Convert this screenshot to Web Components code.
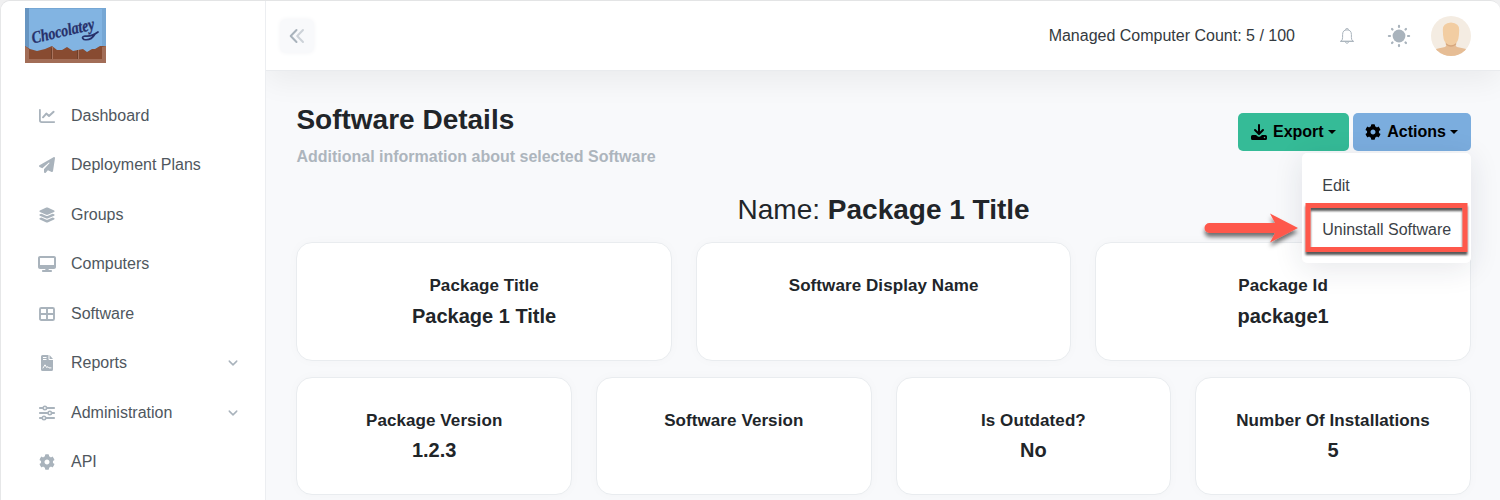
<!DOCTYPE html>
<html lang="en">
<head>
<meta charset="utf-8">
<title>Software Details</title>
<style>
html,body{margin:0;height:100%;overflow:hidden}
body{font:16px/24px "Liberation Sans",Arial,sans-serif;color:#212529;background:#f0f0f1}
</style>
</head>
<body>
<app-shell></app-shell>
<script>
const define = (name, html) => customElements.define(name, class extends HTMLElement {
  constructor() {
    super();
    const t = document.createElement('template');
    t.innerHTML = html;
    this.attachShadow({mode: 'open'}).append(t.content.cloneNode(true));
  }
});

const gear = '<path d="M487.4 315.7l-42.6-24.6c4.3-23.2 4.3-47 0-70.2l42.6-24.6c4.9-2.8 7.1-8.6 5.5-14-11.1-35.6-30-67.8-54.7-94.6-3.8-4.1-10-5.1-14.8-2.3L380.8 110c-17.9-15.4-38.5-27.3-60.8-35.1V25.8c0-5.6-3.9-10.5-9.4-11.7-36.7-8.2-74.3-7.8-109.2 0-5.5 1.2-9.4 6.1-9.4 11.7V75c-22.2 7.9-42.8 19.8-60.8 35.1L88.7 85.5c-4.9-2.8-11-1.9-14.8 2.3-24.7 26.7-43.6 58.9-54.7 94.6-1.7 5.4.6 11.2 5.5 14L67.3 221c-4.3 23.2-4.3 47 0 70.2l-42.6 24.6c-4.9 2.8-7.1 8.6-5.5 14 11.1 35.6 30 67.8 54.7 94.6 3.8 4.1 10 5.1 14.8 2.3l42.6-24.6c17.9 15.4 38.5 27.3 60.8 35.1v49.2c0 5.6 3.9 10.5 9.4 11.7 36.7 8.2 74.3 7.8 109.2 0 5.5-1.2 9.4-6.1 9.4-11.7v-49.2c22.2-7.9 42.8-19.8 60.8-35.1l42.6 24.6c4.9 2.8 11 1.9 14.8-2.3 24.7-26.7 43.6-58.9 54.7-94.6 1.5-5.5-.7-11.3-5.6-14.1zM256 336c-44.1 0-80-35.9-80-80s35.9-80 80-80 80 35.9 80 80-35.9 80-80 80z"/>';
const ICONS = {
  chart: ['0 0 16 16', '<g fill="none" stroke="currentColor" stroke-linecap="round" stroke-linejoin="round"><path d="M.9 1.8V12.300q0 1.800 1.800 1.800H15.200" stroke-width="1.800"/><path d="M4 9.300 7.300 5.600 10 8 14.600 3.800" stroke-width="2"/></g>'],
  plane: ['0 0 512 512', '<path d="M498.1 5.6c10.1 7 15.4 19.1 13.5 31.2l-64 416c-1.5 9.7-7.4 18.2-16 23s-18.9 5.4-28 1.6L284 427.7l-68.500 74.100c-8.900 9.700-22.900 12.900-35.200 8.100S160 493.200 160 480V396.400c0-4 1.500-7.800 4.200-10.700L331.800 202.800c5.800-6.300 5.600-16-.4-22s-15.700-6.400-22-.7L106 360.800 17.700 316.600C7.100 311.300 .3 300.700 0 288.900s5.900-22.800 16.100-28.700l448-256c10.700-6.100 23.900-5.500 34 1.400z"/>'],
  layers: ['16 0 544 512', '<path d="M264.5 5.2c14.9-6.9 32.1-6.9 47 0l218.600 101c8.500 3.900 13.900 12.400 13.900 21.800s-5.400 17.900-13.900 21.800l-218.600 101c-14.900 6.900-32.100 6.900-47 0L45.900 149.800C37.400 145.800 32 137.300 32 128s5.400-17.900 13.900-21.800zM476.900 209.600l53.200 24.600c8.500 3.900 13.900 12.400 13.900 21.800s-5.400 17.900-13.900 21.800l-218.600 101c-14.900 6.900-32.100 6.900-47 0L45.900 277.800C37.400 273.800 32 265.300 32 256s5.400-17.900 13.900-21.800l53.200-24.600 152 70.200c23.400 10.800 50.400 10.800 73.800 0zm-152 198.200l152-70.200 53.200 24.600c8.500 3.900 13.900 12.400 13.900 21.800s-5.400 17.900-13.900 21.800l-218.600 101c-14.900 6.900-32.100 6.900-47 0L45.900 405.800C37.400 401.800 32 393.300 32 384s5.400-17.900 13.900-21.800l53.200-24.600 152 70.200c23.400 10.800 50.400 10.800 73.800 0z"/>'],
  desktop: ['0 0 576 512', '<path d="M64 0C28.700 0 0 28.700 0 64V352c0 35.300 28.700 64 64 64H240l-10.700 32H160c-17.700 0-32 14.300-32 32s14.300 32 32 32H416c17.700 0 32-14.300 32-32s-14.300-32-32-32H346.700L336 416H512c35.300 0 64-28.700 64-64V64c0-35.300-28.700-64-64-64zM512 64V288H64V64z"/>'],
  table: ['0 0 16 16', '<path fill="none" stroke="currentColor" stroke-width="1.900" d="M2.300 2H13.700Q15 2 15 3.300V12.700Q15 14 13.700 14H2.300Q1 14 1 12.700V3.300Q1 2 2.300 2zM8 2V14M1 8H15"/>'],
  report: ['0 0 16 16', '<path fill-rule="evenodd" d="M3.500 0H9.500V4Q9.500 5 10.500 5H14V14.500Q14 16 12.500 16H3.500Q2 16 2 14.500V1.500Q2 0 3.500 0zM10.500 0 14 4H10.500zM4 2V3H7.500V2zM4 4V5H7.500V4z"/><path fill="none" stroke="#fff" stroke-linecap="round" stroke-linejoin="round" d="M4 13 6 9.800 7.600 12.500 9 11.700 10 12.900H12"/>'],
  sliders: ['0 0 16 16', '<g fill="none" stroke="currentColor" stroke-width="1.800" stroke-linecap="round"><path d="M.8 3H3.600M8.200 3H15.200M.8 8H8.500M13.100 8H15.200M.8 13H2.700M7.300 13H15.200"/><g stroke-width="1.600"><circle cx="5.900" cy="3" r="1.700"/><circle cx="10.800" cy="8" r="1.700"/><circle cx="5" cy="13" r="1.700"/></g></g>'],
  gear: ['0 0 512 512', gear],
  export: ['0 0 16 16', '<path fill="none" stroke="currentColor" stroke-width="2" stroke-linecap="round" stroke-linejoin="round" d="M8 1V9.300M4 6 8 10 12 6"/><path fill-rule="evenodd" d="M1.500 11H5L6.500 12.300Q8 13.300 9.500 12.300L11 11H14.500Q16 11 16 12.500V14.500Q16 16 14.500 16H1.500Q0 16 0 14.500V12.500Q0 11 1.500 11zM13.500 12.800A.75.75 0 1 0 13.500 14.300 .75.75 0 1 0 13.500 12.800z"/>'],
  chevron: ['0 0 16 16', '<path fill="none" stroke="currentColor" stroke-width="2.300" stroke-linecap="round" stroke-linejoin="round" d="M2 5 8 11 14 5"/>'],
  collapse: ['0 0 16 16', '<g fill="none" stroke="currentColor" stroke-width="2" stroke-linecap="round" stroke-linejoin="round"><path d="M7.500 2 1.700 8 7.500 14"/><path opacity=".55" d="M14 2 8.200 8 14 14"/></g>'],
  bell: ['0 0 16 16', '<path fill="none" stroke="currentColor" stroke-width="1" stroke-linejoin="round" d="M6.400 1.700Q6.400.6 8 .6T9.600 1.700M2 13.300H14Q12.400 12 12.400 9.600V6.600Q12.400 1.900 8 1.900T3.600 6.600V9.600Q3.600 12 2 13.300zM1 13.300H15M6.300 14.200Q6.800 15.200 8 15.200T9.700 14.200"/>'],
  sun: ['0 0 24 24', '<circle cx="12" cy="12" r="6.400"/><path stroke="currentColor" stroke-width="2.200" stroke-linecap="round" d="M12 1.900V3M12 21V22.100M1.900 12H3M21 12H22.100M5 5 5.500 5.500M18.500 18.500 19 19M5 19 5.500 18.500M18.500 5.500 19 5"/>']
};

customElements.define('app-icon', class extends HTMLElement {
  connectedCallback() {
    if (this.shadowRoot) return;
    const [box, art] = ICONS[this.getAttribute('name')];
    this.attachShadow({mode: 'open'}).innerHTML =
      `<style>:host{display:block;width:16px;height:16px;flex:none}svg{display:block;width:100%;height:100%}</style><svg viewBox="${box}" fill="currentColor">${art}</svg>`;
  }
});

define('brand-logo', `<style>:host{display:block;width:81px;height:55px;margin-left:24px}svg{display:block;overflow:visible}</style>
<svg width="81" height="55" viewBox="0 0 81 55">
<path fill="#82b4e2" d="M0 0H81V55H0z"/><path fill="#6795c1" d="M0 0H4V46H0z"/><path fill="#76a7d4" d="M77 1H81V46H77zM4 0H81V1H4z"/>
<path fill="#884b31" d="M0 38 5 41 12 43 20 41 27 38 32 42 37 42 42 39 48 43 53 42 58 41 62 44 67 41 70 41 75 38 81 38V55H0z"/>
<path fill="#a26d57" d="M0 38 4 41V51L0 55zM77 39 81 38V55L77 51zM0 55 4 51H77L81 55z"/>
<path stroke="#a8735d" d="M27.500 39V51M53.500 42V51"/><path stroke="#70402b" d="M26.500 40V51M52.500 42V51"/>
<text transform="translate(8 35.500) rotate(-13)" textLength="64" lengthAdjust="spacingAndGlyphs" font-family="Liberation Serif,serif" font-weight="bold" font-style="italic" fill="#27306a" stroke="#27306a" stroke-width=".3" font-size="17">Chocolatey</text>
<path fill="none" stroke="#27306a" stroke-width="1.700" stroke-linecap="round" d="M70 26Q66 33 59 31.500Q55.500 29 60 28Q66 29 73 24"/>
</svg>`);

customElements.define('nav-list', class extends HTMLElement {
  connectedCallback() {
    if (this.shadowRoot) return;
    const items = [['Dashboard','chart'],['Deployment Plans','plane'],['Groups','layers'],['Computers','desktop'],['Software','table'],['Reports','report',1],['Administration','sliders',1],['API','gear']];
    const root = this.attachShadow({mode: 'open'});
    root.innerHTML = `<style>:host{display:block}
.row{display:flex;align-items:center;height:49.520px;padding:0 27.500px 0 38px;color:#4f575e}
.label{flex:1}app-icon{color:#a9b3bc}.icon{margin:0 16px 0 0}
.desktop{width:18px;margin:0 15px 0 -1px}.arrow{width:10px;height:10px}</style>` +
      items.map(([t, i, e]) => `<div class="row"><app-icon class="icon ${i}" name="${i}"></app-icon><span class="label">${t}</span>${e ? '<app-icon class="arrow" name="chevron"></app-icon>' : ''}</div>`).join('');
  }
});

define('side-bar', `<style>
:host{display:block;box-sizing:border-box;width:265px;height:499px;flex:none;background:#fff;border-right:1px solid #eceef1;padding-top:7px}
nav-list{margin-top:28px}
</style><brand-logo></brand-logo><nav-list></nav-list>`);

define('user-avatar', `<style>:host{display:block;width:40px;height:40px}</style>
<svg width="40" height="40" viewBox="0 0 40 40"><defs><clipPath id="c"><circle cx="20" cy="20" r="20"/></clipPath></defs>
<g clip-path="url(#c)"><path fill="#f4ece2" d="M0 0H40V40H0z"/><path fill="#e6bd95" d="M5 33Q9 32 14 31Q15.500 30 15.500 27H24.500Q24.500 30 26 31Q31 32 35 33V40H5z"/><path fill="#d6a77e" d="M14.800 26Q20 31 25.200 26V28.500Q20 33 14.800 28.500z"/><path fill="#f2cda2" d="M11.800 14Q11.500 7 20 6.500Q28.500 7 28.200 14Q28 25 25.200 27Q20 31.500 14.800 27Q12 25 11.800 14z"/></g></svg>`);

define('top-bar', `<style>
:host{display:flex;align-items:center;box-sizing:border-box;height:70px;background:#fff;border-bottom:1px solid #e9ebee;padding:0 29px 0 14px;position:relative;box-shadow:0 10px 30px rgba(20,20,25,.06);color:#343a40;clip-path:inset(0 0 -50px 0)}
.toggle{display:grid;place-items:center;width:34px;height:34px;border-radius:6px;background:#f8f9fb;box-shadow:0 0 5px #f3f4f6;color:#a9b3bc}
.count{margin-left:auto;margin-right:44px}
app-icon{color:#a9b3bc}.sun{width:24px;height:24px;margin:0 20px 0 32px}
</style><div class="toggle"><app-icon name="collapse"></app-icon></div><span class="count">Managed Computer Count: 5 / 100</span><app-icon name="bell"></app-icon><app-icon class="sun" name="sun"></app-icon><user-avatar></user-avatar>`);

define('menu-button', `<style>
:host{display:flex;align-items:center;box-sizing:border-box;height:38px;padding:0 12.500px;border-radius:5px;color:#000;font-weight:700}
.t{margin-left:6px}
.caret{border:4px solid transparent;border-top-color:#000;border-bottom:0;margin-left:4px}
</style><slot name="icon"></slot><span class="t"><slot></slot></span><span class="caret"></span>`);

define('call-out', `<style>
:host{display:block;position:absolute;left:-98px;top:50px;width:264px;height:54px;pointer-events:none}
svg{display:block;overflow:visible}
</style><svg width="264" height="54"><defs><filter id="s" x="-10%" y="-30%" width="120%" height="180%"><feDropShadow dx="0" dy="4" stdDeviation="2" flood-opacity=".55"/></filter><filter id="b" x="-10%" y="-30%" width="120%" height="180%"><feDropShadow dx="0" dy="3" stdDeviation=".8" flood-opacity=".65"/></filter></defs>
<path filter="url(#s)" fill="#fe594b" d="M5.500 20H71L66 10.500 94 25 66 39.500 71 30H5.500A5 5 0 0 1 5.500 20z"/>
<path filter="url(#b)" fill="none" stroke="#fe594b" stroke-width="5" d="M104 2.500H261V46.500H104z"/></svg>`);

define('action-menu', `<style>
:host{display:block;position:absolute;right:0;top:40px;width:169px;height:110px;box-sizing:border-box;padding:11px 0;background:#fff;border-radius:5px;box-shadow:0 5px 30px rgba(30,35,65,.11);color:#3c4248;z-index:2}
.item{height:44px;line-height:43px;padding-left:20.400px;white-space:nowrap}
</style><div class="item">Edit</div><div class="item">Uninstall Software</div><call-out></call-out>`);

define('page-heading', `<style>
:host{display:flex;justify-content:space-between;height:91px}
h1{margin:1px 0 0;font-size:28px;line-height:34px}
p{margin:8px 0 0;font-weight:700;color:#adb5bd;line-height:24px}
.actions{display:flex;gap:4px;height:38px;margin-top:11px;position:relative}
.green{background:#35bb97;width:111px;padding-left:13.200px}.blue{background:#7badde;width:118px}
</style><div><h1>Software Details</h1><p>Additional information about selected Software</p></div>
<div class="actions"><menu-button class="green"><app-icon slot="icon" name="export"></app-icon>Export</menu-button><menu-button class="blue"><app-icon slot="icon" name="gear"></app-icon>Actions</menu-button><action-menu></action-menu></div>`);

define('info-card', `<style>
:host{display:flex;flex-direction:column;align-items:center;box-sizing:border-box;height:118.500px;padding-top:31px;background:#fff;border:1px solid #e9ecef;border-radius:16px;box-shadow:0 0 12px rgba(40,50,70,.025)}
.title{font-weight:700;font-size:17px;line-height:24px;letter-spacing:.08px}
.value{font-weight:700;font-size:20px;line-height:24px;margin-top:var(--value-gap,6px)}
</style><div class="title"><slot name="title"></slot></div><div class="value"><slot></slot></div>`);

define('details-page', `<style>
:host{display:block;padding:31px 29.200px 0 30.400px}
h2{margin:0;text-align:center;font-weight:400;font-size:28px;line-height:34px}
.row{display:grid;gap:24px}.three{grid-template-columns:repeat(3,1fr);margin-top:15px}.four{grid-template-columns:repeat(4,1fr);margin-top:16px;--value-gap:5px}
.four info-card{height:118px}
</style><page-heading></page-heading>
<h2>Name: <b>Package 1 Title</b></h2>
<div class="row three"><info-card><span slot="title">Package Title</span>Package 1 Title</info-card><info-card><span slot="title">Software Display Name</span></info-card><info-card><span slot="title">Package Id</span>package1</info-card></div>
<div class="row four"><info-card><span slot="title">Package Version</span>1.2.3</info-card><info-card><span slot="title">Software Version</span></info-card><info-card><span slot="title">Is Outdated?</span>No</info-card><info-card><span slot="title">Number Of Installations</span>5</info-card></div>`);

define('app-shell', `<style>
:host{display:flex;box-sizing:border-box;width:1500px;height:500px;overflow:hidden;background:#f8f9fb;border-top:1px solid #e3e4e5;border-left:1px solid #e6e7e8;border-radius:10px 10px 0 0}
main{flex:1;min-width:0}
</style><side-bar></side-bar><main><top-bar></top-bar><details-page></details-page></main>`);
</script>
</body>
</html>
